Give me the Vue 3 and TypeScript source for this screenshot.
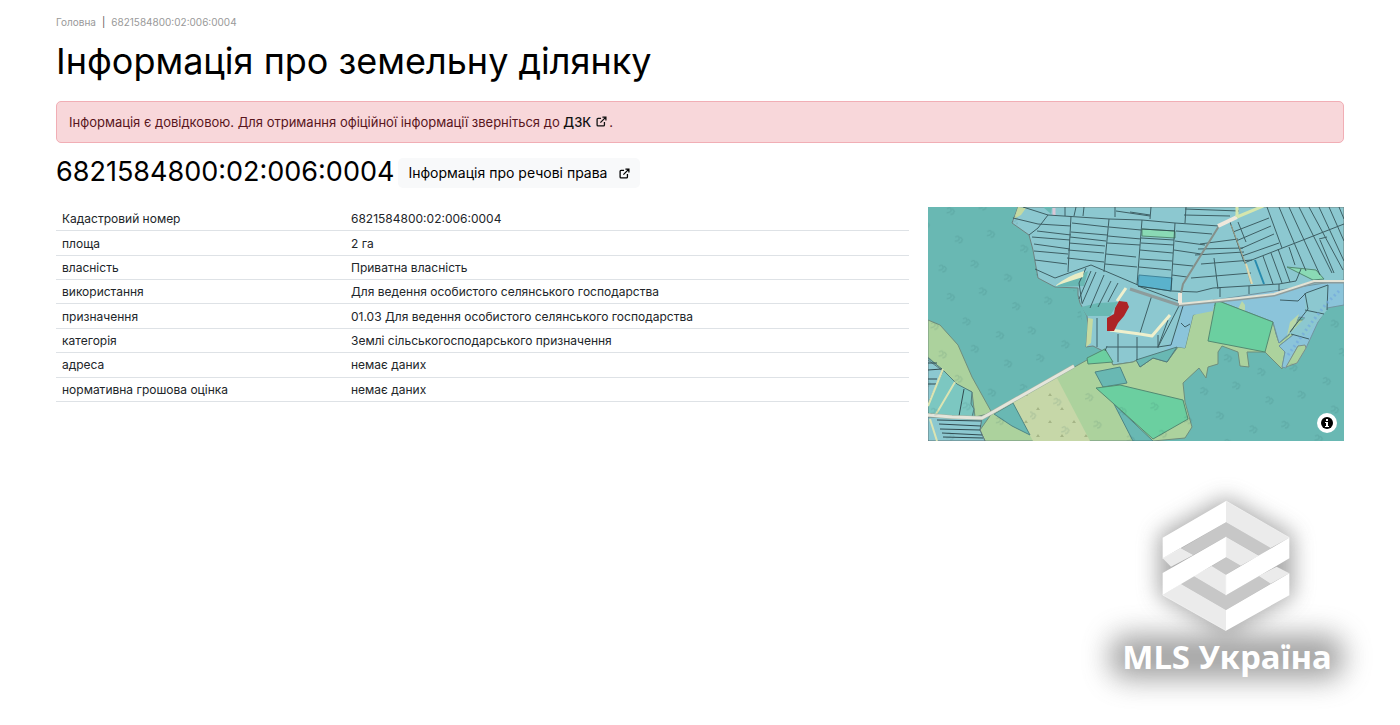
<script setup lang="ts">
interface ParcelRow {
  label: string
  value: string
}

const cadastralNumber = '6821584800:02:006:0004'

const rows: ParcelRow[] = [
  { label: 'Кадастровий номер', value: cadastralNumber },
  { label: 'площа', value: '2 га' },
  { label: 'власність', value: 'Приватна власність' },
  { label: 'використання', value: 'Для ведення особистого селянського господарства' },
  { label: 'призначення', value: '01.03 Для ведення особистого селянського господарства' },
  { label: 'категорія', value: 'Землі сільськогосподарського призначення' },
  { label: 'адреса', value: 'немає даних' },
  { label: 'нормативна грошова оцінка', value: 'немає даних' },
]
</script>

<template>
  <main class="page">
    <nav class="crumbs" aria-label="Навігація">
      <a href="#">Головна</a><span class="bar">|</span><span>{{ cadastralNumber }}</span>
    </nav>
    <h1>Інформація про земельну ділянку</h1>
    <div class="alert" role="alert">
      Інформація є довідковою. Для отримання офіційної інформації зверніться до
      <a href="#">ДЗК<svg class="ext" viewBox="0 0 12 12" aria-hidden="true"><path d="M5.500 2.500H2.200a1 1 0 0 0-1 1v6.300a1 1 0 0 0 1 1h6a1 1 0 0 0 1-1V6.500M7 1.200h3.800V5M10.500 1.500 4.800 7.200" /></svg></a>.
    </div>
    <div class="heading">
      <h2>{{ cadastralNumber }}</h2>
      <a class="rights" href="#">Інформація про речові права<svg class="ext" viewBox="0 0 12 12" aria-hidden="true"><path d="M5.500 2.500H2.200a1 1 0 0 0-1 1v6.300a1 1 0 0 0 1 1h6a1 1 0 0 0 1-1V6.500M7 1.200h3.800V5M10.500 1.500 4.800 7.200" /></svg></a>
    </div>
    <section class="content">
      <table>
        <tbody>
          <tr v-for="row in rows" :key="row.label">
            <th scope="row">{{ row.label }}</th>
            <td>{{ row.value }}</td>
          </tr>
        </tbody>
      </table>
      <div class="map">
        <svg class="terrain" viewBox="928 207 416 234" preserveAspectRatio="xMidYMid slice" role="img" aria-label="Карта">
          <defs>
            <pattern id="trees" width="66" height="58" patternUnits="userSpaceOnUse" patternTransform="rotate(8)">
              <g fill="none" stroke="#24605c" stroke-width="1.500" opacity=".13">
                <path d="M8 8q3-3 4 0t-4 4M13 7l3 3M12 13q3 0 3-3M43 17q3-3 4 0t-4 4M48 16l3 3M47 22q3 0 3-3M20 34q3-3 4 0t-4 4M25 33l3 3M24 39q3 0 3-3M55 44q3-3 4 0t-4 4M60 43l3 3M59 49q3 0 3-3" />
              </g>
            </pattern>
            <pattern id="scrub" width="24" height="27" patternUnits="userSpaceOnUse">
              <path d="m4 5 2-3 2 3zM16 18l2-3 2 3z" fill="#a5b587" />
            </pattern>
          </defs>
          <rect x="928" y="207" width="416" height="234" fill="#69b8b3" />
          <!-- arable land -->
          <path d="M1018 207L1012 223L1029 235L1033 250L1038 278L1055 287L1078 288V295L1080 303L1087 316L1088 325L1086 347L1093 346L1107 353L1113 365L1133 362L1137 360L1167 352L1178 347L1193 315L1213 300H1273L1344 283V207Z" fill="#8cc8d0" stroke="#6d8280" />
          <!-- meadows -->
          <g fill="#acd29d" stroke="#6f8e7d" stroke-width="1">
            <path d="M928 320L940 325L958 345L972 377L992 413L975 417L972 392L957 385L942 370L928 357Z" />
            <path d="M985 441L980 430L992 413L1087 360L1105 349L1113 365L1133 362L1137 360L1140 367L1153 358L1167 362L1178 347L1185 348L1193 315L1213 305L1273 322L1276 334L1279 343L1289 335L1298 320L1305 320L1293 335L1279 346L1285 352L1282 369L1265 352H1247L1249 367L1240 366L1238 352L1222 346L1218 352V364L1208 367L1206 378L1199 368L1183 383L1185 402L1192 427L1185 438L1153 441Z" />
          </g>
          <path d="M1013 403l44-25 33 63h-57z" fill="#c6d7a8" />
          <path d="M1013 403l44-25 33 63h-57z" fill="url(#scrub)" />
          <path d="M994 414l19-11 17 32-18-9zM1095 372l25-5 7 16-24 4zM1114 404l39 37h-20z" fill="#69b8b3" stroke="#4f8585" />
          <!-- stream valley -->
          <g fill="#8bc4da" stroke="#7295a0">
            <path d="M1216 300L1344 280V305L1327 308L1318 322L1306 348L1298 346L1286 368L1282 367L1285 352L1279 346L1293 335L1305 318L1299 317L1289 334L1279 343L1273 322Z" />
            <path d="M1179 304L1215 300L1213 311L1193 315L1185 348L1178 347L1165 350L1175 335L1181 318Z" stroke="none" />
          </g>
          <path d="M1305 293L1328 285L1327 310L1306 336L1289 334L1305 318Z" fill="#8cc8d0" />
          <path d="M1136 360L1177 347L1167 362L1153 358L1140 367Z" fill="#69b8b3" stroke="#527c7c" />
          <path d="M1055 287l33-16-4 15zM1081 307l17-4 20-1-5 9-3 5h-23z" fill="#69b8b3" />
          <path d="M1286 367L1297 363L1306 348L1305 345L1298 346Z" fill="#acd29d" stroke="#7d918c" />
          <path d="M1238 309l4-8 3 4v6zM1290 322l9-8-3 9-9 13z" fill="#b9d8a8" />
          <!-- lower-left plots -->
          <path d="M928 358l14 11 15 15 15 8-1 12 3 5-2 8-35-1-9-3z" fill="#7cc7c1" stroke="#547d7c" />
          <path d="M928 360l15 11-15 33zM928 417l54 1-2 12 5 11h-57z" fill="#8cc8d0" stroke="#61777a" />
          <path d="M937 420l44 1M939 424l42 2M940 429l40 1M942 433l40 2M943 437l40 1M959 416l5-27M928 363h9M928 370l14-1M928 379h9M928 384h8" stroke="#314b50" fill="none" />
          <path d="M928 406l15-37M935 416l20-34M930 419l7 22" stroke="#dbe4b2" stroke-width="2" fill="none" />
          <!-- highlighted parcels -->
          <g fill="#6bcfa0" stroke="#538a72">
            <path d="M1216 300L1273 322L1265 352L1208 341ZM1087 358L1105 349L1113 362L1088 364Z" />
            <path d="M1096 388L1120 385L1183 400L1188 419L1153 439L1114 404Z" />
            <path d="M1287 267l29 3 8 9-11 1z" fill="#8adab5" />
            <path d="M1142 229l33 2v7l-33-2z" fill="#8adab5" />
          </g>
          <path d="M1139 275l33 3-1 13-33-5z" fill="#5ab2cc" stroke="#40849a" />
          <path d="M1014 219l4-12 8 1-5 7zM1086 347l2-29 5 1-2 24z" fill="#c5daa1" />
          <path d="M1043 207h9l-1 7z" fill="#69b8b3" />
          <path d="M1054 208v7" stroke="#d9c7d6" stroke-width="3" />
          <!-- plot boundaries -->
          <g fill="none" stroke="#314d52" stroke-width="1" opacity=".85">
            <path d="M1013 218l25 6M1023 207l25 8 61 4 33 1 33 3 44 3M1048 215l-10 13-9 7M1071 216l-3 56M1109 219l-5 53M1142 220l-5 65M1175 223l-4 67M1084 207l-1 9M1115 207v10M1065 207v9M1076 207l-2 9M1151 207l-1 12M1186 207l-1 16M1130 212l20 3M1185 209l54 2M1184 215l46 1M1116 211l34 5" />
            <path d="M1038 224l33 2M1037 231l34 4M1032 237l38 3M1034 244l36 5M1034 251l34 3M1035 260l32 4M1072 223l36 4M1071 232l36 3M1070 237l36 4M1069 243l36 3M1068 250l36 3M1067 258l37 4M1109 227l32 3M1108 236l33 3M1107 243l33 2M1106 254l30 3M1105 264l32 3M1142 229l33 2M1141 238l33 2M1141 243l33 2M1140 250l33 3M1140 259l32 2M1139 267l32 3M1176 231l36 3M1175 241l30 4M1174 250l27 4M1173 264l20 2M1172 275l15 2" />
            <path d="M1138 286l33 5 26 1 16-4 66-4 17-3 5-12M1220 287v10M1249 286v8M1279 284v7M1035 269l20 9 36-13 47 20M1086 268l-7 15 3 20M1096 272l-14 32M1104 275l-14 33M1111 281l-13 26M1118 283l-10 19M1091 271l-12 28M1200 244l38-5M1198 249l45-1M1195 255l49-3M1201 264l51-4M1191 278l60-5M1214 258l4 31M1230 222l14 40M1238 222l8 20" />
            <path d="M1233 232l36-14M1236 241l35-15M1240 249l34-15M1242 256l37-13M1244 263l100-39M1267 207l15 41M1279 207l27 64M1289 207l31 68M1299 207l33 66M1309 207l34 63M1319 207l25 54M1329 207l15 34M1339 207l5 12M1319 239l8-2M1263 256l10 28M1271 253l11 30M1278 249l12 33M1289 247l6 18M1320 240l14 33" />
            <path d="M1097 318v29M1107 346l-2 5M1118 334v28M1137 337v23M1158 335v13M1107 347h51l13-2M1168 320l-10 27M1180 304l-22 43M1183 306l-12 39M1152 295l-12 38M1138 286l43 16M1280 300l18 1 8-8 22-8M1305 293l3 16-18 23M1328 285l-1 25M1305 310l19 4M1291 334l18 5M1181 323l4 4 5-3" />
          </g>
          <path d="M1255 260l9 24" stroke="#288bae" stroke-width="2" />
          <!-- roads -->
          <g fill="none" stroke-linejoin="round">
            <path d="M1180 298l3-14 36-58" stroke="#85908a" stroke-width="2" />
            <path d="M1130 289l49 16 60-6 35-4 40-13h30" stroke="#8d9c9c" stroke-width="3" />
            <path d="M1179 304l60-6 35-4 40-13h30" stroke="#e3e3d6" stroke-width="2" />
            <path d="M1218 226l19-9 M1180 303v-10" stroke="#efe8dc" stroke-width="4" />
            <path d="M1170 315l-18 21-12-2-30-4M1117 301l9-13" stroke="#eff0cd" stroke-width="3" />
            <path d="M1237 217l31-13M1237 217v-10" stroke="#d5e6ad" stroke-width="3" />
            <path d="M1055 286q12-10 29-15l-1 6q-16 5-28 9z" fill="#e9edc4" />
            <path d="M928 415l24 2 30 1 11-6 81-46" stroke="#a2b3a2" stroke-width="4" />
            <path d="M928 415l24 2 30 1 11-6 81-46" stroke="#e4e5db" stroke-width="3" />
            <path d="M1231 225l14 37 6 22" stroke="#9f9c82" />
            <path d="M1246 264l6 20" stroke="#dfdab1" stroke-width="2" />
            <path d="M1288 355l21-29 17-22 15-15" stroke="#74a9dd" stroke-width="3" stroke-dasharray="2 3" opacity=".7" />
          </g>
          <path d="M1119 301l8 1 2 5-5 9-6 7-4 8h-7v-13l7-4 1-6z" fill="#ad2426" />
          <rect x="928" y="207" width="90" height="234" fill="url(#trees)" />
          <path d="M1018 226l15 15 6 40 39 10 8 55-68 48zM1030 410l60-30 105 18 6-35 35-14 60 15 48-60v137h-314z" fill="url(#trees)" />
        </svg>
        <button class="info" type="button" aria-label="Про карту">
          <svg viewBox="0 0 20 20" aria-hidden="true"><circle cx="10" cy="10" r="6" fill="#000" /><path d="M9 6h2v2H9zM8 9h3v4h1v1H8v-1h1v-3H8z" fill="#fff" /></svg>
        </button>
      </div>
    </section>
    <footer class="brand">
      <svg viewBox="0 0 900 720" role="img" aria-label="MLS Україна">
        <defs>
          <filter id="soft" x="-40%" y="-40%" width="180%" height="180%"><feGaussianBlur stdDeviation="32" /></filter>
          <filter id="wide" x="-30%" y="-150%" width="160%" height="400%"><feGaussianBlur stdDeviation="42" /></filter>
        </defs>
        <path d="M438 52l202 112v184L438 466 236 348V164z" fill="#777" opacity=".62" filter="url(#soft)" />
        <rect x="90" y="465" width="700" height="132" rx="50" fill="#777" opacity=".68" filter="url(#wide)" />
        <path d="M438 127l135 77-35 23-100-57-98 55-36-20zM438 232l44 25-44 27-43-25zM340 288l98 58 98-58 36 23-134 79-136-79z" fill="#c7c7c7" />
        <path d="M438 63l190 110-56 31-134-77zM248 235l55-30 37 20-67 35zM438 170l99 57-55 30-44-25zM340 288l55-30 43 26v62zM590 260l38 20-56 31-36-23zM248 345l54-34 136 79v62z" fill="#ebebeb" />
        <path d="M438 63v64l-190 108v-62zM438 170v62L248 345v-66zM628 173v62L438 346v-62zM628 280v66L438 452v-62z" fill="#fff" />
        <path d="M438 63l190 110M248 235l55-30M438 170v62M438 284v62M248 345l190 107" stroke="#f8f8f8" stroke-width="2" fill="none" />
        <text x="441" y="566" text-anchor="middle">MLS Україна</text>
      </svg>
    </footer>
  </main>
</template>

<style>
body {
  margin: 0;
  background: #fff;
}
</style>

<style scoped>
.page {
  box-sizing: border-box;
  padding: 15px 56px 0;
  font-family: Inter, 'Noto Sans', sans-serif;
  font-size: 12px;
  color: #212529;
}
.crumbs {
  display: flex;
  gap: 6px;
  font-size: 10px;
  line-height: 14px;
  color: #999;
}
.crumbs a {
  color: inherit;
  text-decoration: none;
}
.bar {
  color: #555;
}
h1 {
  margin: 10px 0 18px;
  font-size: 36px;
  line-height: 44px;
  font-weight: 400;
  color: #000;
}
.alert {
  padding: 11px 12px;
  border: 1px solid #f1aeb5;
  border-radius: 5px;
  background: #f8d7da;
  font-size: 13px;
  line-height: 18px;
  color: #58151c;
}
.alert a {
  font-weight: 500;
  color: #111;
  text-decoration: none;
}
.ext {
  width: 11px;
  height: 11px;
  fill: none;
  stroke: currentColor;
  stroke-width: 1.4px;
}
.alert .ext {
  margin: 0 2px 0 5px;
}
.heading {
  display: flex;
  align-items: center;
  gap: 4px;
  margin-top: 12px;
}
h2 {
  margin: 0;
  font-size: 27px;
  line-height: 32px;
  font-weight: 400;
  color: #000;
}
.rights {
  display: flex;
  align-items: center;
  gap: 12px;
  margin-top: 3px;
  padding: 5px 10px;
  border-radius: 5px;
  background: #f8f9fa;
  font-size: 14px;
  line-height: 20px;
  color: #000;
  text-decoration: none;
}
.content {
  display: grid;
  grid-template-columns: 853fr 416fr;
  gap: 19px;
  align-items: start;
  margin-top: 19px;
}
table {
  width: 100%;
  height: 195px;
  border-collapse: collapse;
}
th,
td {
  padding: 3px 6px 2px;
  border-bottom: 1px solid #dee2e6;
  line-height: 18px;
  font-weight: 400;
  text-align: left;
}
th {
  width: 277px;
}
.map {
  position: relative;
  aspect-ratio: 416 / 234;
}
.terrain {
  display: block;
  width: 100%;
  height: 100%;
}
.info {
  position: absolute;
  right: 7px;
  bottom: 8px;
  width: 20px;
  height: 20px;
  padding: 0;
  border: 0;
  border-radius: 50%;
  background: #fff;
}
.info svg {
  display: block;
}
.brand {
  display: flex;
  justify-content: flex-end;
  margin: 39px -36px 0 0;
}
.brand svg {
  width: 300px;
  height: 240px;
  overflow: visible;
}
.brand text {
  font: 700 99px 'Noto Sans', sans-serif;
  fill: #fff;
}
</style>
